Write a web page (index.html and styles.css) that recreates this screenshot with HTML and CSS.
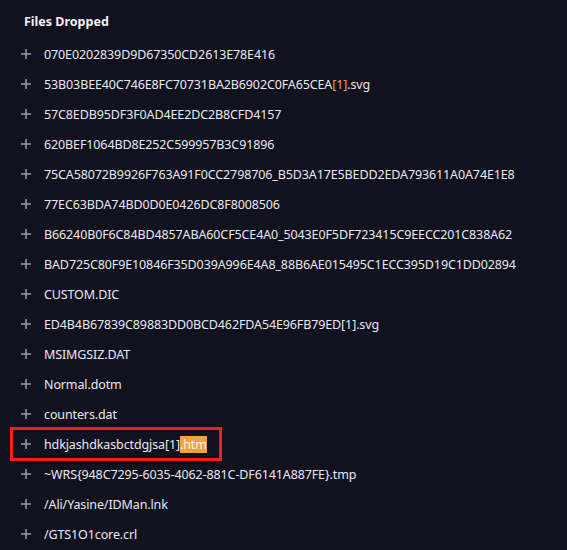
FILE: index.html
```html
<!DOCTYPE html>
<html>
<head>
<meta charset="utf-8">
<link rel="stylesheet" href="styles.css">
</head>
<body>
<div class="panel">
  <h2 class="title">Files Dropped</h2>
  <ul class="list">
    <li class="row"><svg class="plus" viewBox="0 0 10 10"><path d="M5 0V10M0 5H10"/></svg><span class="name">070E0202839D9D67350CD2613E78E416</span></li>
    <li class="row"><svg class="plus" viewBox="0 0 10 10"><path d="M5 0V10M0 5H10"/></svg><span class="name">53B03BEE40C746E8FC70731BA2B6902C0FA65CEA<span class="link">[1]</span>.svg</span></li>
    <li class="row"><svg class="plus" viewBox="0 0 10 10"><path d="M5 0V10M0 5H10"/></svg><span class="name">57C8EDB95DF3F0AD4EE2DC2B8CFD4157</span></li>
    <li class="row"><svg class="plus" viewBox="0 0 10 10"><path d="M5 0V10M0 5H10"/></svg><span class="name">620BEF1064BD8E252C599957B3C91896</span></li>
    <li class="row"><svg class="plus" viewBox="0 0 10 10"><path d="M5 0V10M0 5H10"/></svg><span class="name">75CA58072B9926F763A91F0CC2798706_B5D3A17E5BEDD2EDA793611A0A74E1E8</span></li>
    <li class="row"><svg class="plus" viewBox="0 0 10 10"><path d="M5 0V10M0 5H10"/></svg><span class="name">77EC63BDA74BD0D0E0426DC8F8008506</span></li>
    <li class="row"><svg class="plus" viewBox="0 0 10 10"><path d="M5 0V10M0 5H10"/></svg><span class="name">B66240B0F6C84BD4857ABA60CF5CE4A0_5043E0F5DF723415C9EECC201C838A62</span></li>
    <li class="row"><svg class="plus" viewBox="0 0 10 10"><path d="M5 0V10M0 5H10"/></svg><span class="name">BAD725C80F9E10846F35D039A996E4A8_88B6AE015495C1ECC395D19C1DD02894</span></li>
    <li class="row"><svg class="plus" viewBox="0 0 10 10"><path d="M5 0V10M0 5H10"/></svg><span class="name">CUSTOM.DIC</span></li>
    <li class="row"><svg class="plus" viewBox="0 0 10 10"><path d="M5 0V10M0 5H10"/></svg><span class="name">ED4B4B67839C89883DD0BCD462FDA54E96FB79ED[1].svg</span></li>
    <li class="row"><svg class="plus" viewBox="0 0 10 10"><path d="M5 0V10M0 5H10"/></svg><span class="name">MSIMGSIZ.DAT</span></li>
    <li class="row"><svg class="plus" viewBox="0 0 10 10"><path d="M5 0V10M0 5H10"/></svg><span class="name">Normal.dotm</span></li>
    <li class="row"><svg class="plus" viewBox="0 0 10 10"><path d="M5 0V10M0 5H10"/></svg><span class="name">counters.dat</span></li>
    <li class="row"><span class="boxed"><svg class="plus" viewBox="0 0 10 10"><path d="M5 0V10M0 5H10"/></svg><span class="name">hdkjashdkasbctdgjsa[1]<span class="hl">.htm</span></span></span></li>
    <li class="row"><svg class="plus" viewBox="0 0 10 10"><path d="M5 0V10M0 5H10"/></svg><span class="name">~WRS{948C7295-6035-4062-881C-DF6141A887FE}.tmp</span></li>
    <li class="row"><svg class="plus" viewBox="0 0 10 10"><path d="M5 0V10M0 5H10"/></svg><span class="name">/Ali/Yasine/IDMan.lnk</span></li>
    <li class="row"><svg class="plus" viewBox="0 0 10 10"><path d="M5 0V10M0 5H10"/></svg><span class="name">/GTS1O1core.crl</span></li>
  </ul>
</div>
</body>
</html>
```
FILE: styles.css
```css
html, body {
  margin: 0;
  padding: 0;
  background: #12121e;
}
body {
  font-family: "Noto Sans", "Open Sans", sans-serif;
  color: #e8e8f0;
  height: 550px;
  overflow: hidden;
}
.panel {
  padding-top: 12px;
}
.title {
  margin: 0 0 7px 24px;
  font-size: 12.5px;
  line-height: 20px;
  font-weight: 700;
  color: #f2f2f6;
}
.list {
  list-style: none;
  margin: 0;
  padding: 0;
}
.row {
  display: flex;
  align-items: center;
  height: 30px;
  padding-left: 21px;
}
.boxed {
  display: flex;
  align-items: center;
  align-self: stretch;
  padding: 0 12px 0 8px;
  margin-left: -8px;
  outline: 3px solid #ff1a1a;
  margin-top: 1px;
  margin-bottom: 1px;
}
.plus {
  width: 10px;
  height: 10px;
  flex: none;
  margin-right: 13px;
  stroke: #9d9da8;
  stroke-width: 1.5;
  fill: none;
}
.name {
  font-size: 12.5px;
  line-height: 19px;
  white-space: nowrap;
  letter-spacing: -0.12px;
}
.link {
  color: #e9a25a;
}
.hl {
  background: #f4a23e;
  color: #f4f4f8;
}
```
